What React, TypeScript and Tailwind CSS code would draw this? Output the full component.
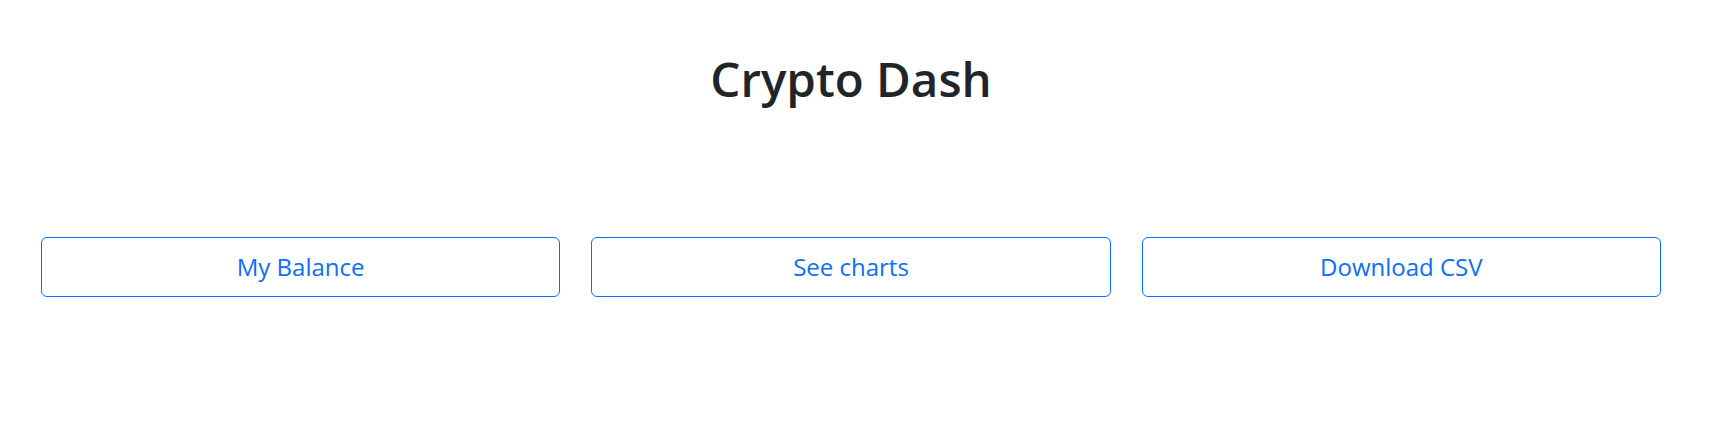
export default function App() {
  const actions = ['My Balance', 'See charts', 'Download CSV'];

  return (
    <div
      className="min-h-[445px] w-full bg-white pr-[17px] text-[#212529]"
      style={{ fontFamily: '"Open Sans", "Noto Sans", "Liberation Sans", sans-serif' }}
    >
      {/* Header */}
      <div className="pt-[50px] text-center">
        <h1 className="text-[47.5px] font-semibold leading-[1.2]">Crypto Dash</h1>
      </div>

      {/* Actions */}
      <div className="mt-[130px] grid grid-cols-3 gap-[31px] px-[41px]">
        {actions.map((label) => (
          <button
            key={label}
            type="button"
            className="flex h-[60px] items-center justify-center rounded-[6px] border border-[#0d6efd] bg-white text-[24px] text-[#0d6efd] hover:bg-[#0d6efd] hover:text-white"
          >
            {label}
          </button>
        ))}
      </div>
    </div>
  );
}
